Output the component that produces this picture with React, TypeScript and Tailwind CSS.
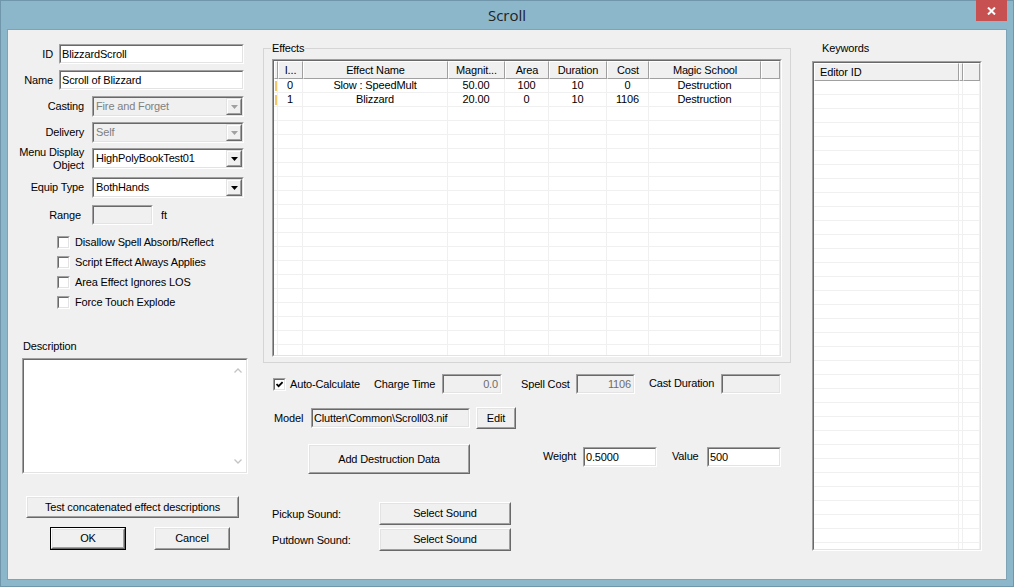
import React from "react";

type Cell = React.ReactNode;

function Sunken({ className = "", inner = "", children }: { className?: string; inner?: string; children?: React.ReactNode }) {
  return (
    <div className={`border border-t-[#a0a0a0] border-l-[#a0a0a0] border-r-white border-b-white ${className}`}>
      <div className={`h-full w-full border border-t-[#696969] border-l-[#696969] border-r-[#e3e3e3] border-b-[#e3e3e3] ${inner}`}>
        {children}
      </div>
    </div>
  );
}

function Button({ className = "", children, isDefault = false }: { className?: string; children?: React.ReactNode; isDefault?: boolean }) {
  const face = (
    <div className={`border border-t-white border-l-white border-r-[#696969] border-b-[#696969] ${isDefault ? "h-full w-full" : "h-full w-full"}`}>
      <div className="flex h-full w-full items-center justify-center whitespace-nowrap border border-t-[#e3e3e3] border-l-[#e3e3e3] border-r-[#a0a0a0] border-b-[#a0a0a0] bg-[#f0f0f0]">
        {children}
      </div>
    </div>
  );
  return (
    <button type="button" className={`shrink-0 ${isDefault ? "border border-black" : ""} ${className}`}>
      {face}
    </button>
  );
}

function Edit({ className = "", value = "", tone = "white", right = false }: { className?: string; value?: string; tone?: "white" | "gray" | "ro"; right?: boolean }) {
  const bg = tone === "white" ? "bg-white text-black" : tone === "gray" ? "bg-[#f0f0f0] text-[#6d6d6d]" : "bg-[#f0f0f0] text-black";
  return (
    <Sunken
      className={`h-[20px] shrink-0 ${className}`}
      inner={`flex items-center overflow-hidden whitespace-nowrap ${bg} ${right ? "justify-end pl-[1px] pr-[2px]" : "pl-[1px] pr-[1px]"}`}
    >
      {value}
    </Sunken>
  );
}

function Arrow({ color }: { color: string }) {
  return (
    <svg width="7" height="4" viewBox="0 0 7 4">
      <polygon points="0,0 7,0 3.5,4" fill={color} />
    </svg>
  );
}

function Combo({ value, disabled = false }: { value: string; disabled?: boolean }) {
  return (
    <Sunken className="h-[21px] w-[152px] shrink-0" inner={`flex ${disabled ? "bg-[#f0f0f0] text-[#808080]" : "bg-white text-black"}`}>
      <div className="flex flex-1 items-center overflow-hidden whitespace-nowrap pl-[2px]">{value}</div>
      <div className="h-full w-[16px] border border-t-[#e3e3e3] border-l-[#e3e3e3] border-r-[#696969] border-b-[#696969]">
        <div className="flex h-full w-full items-center justify-center border border-t-white border-l-white border-r-[#a0a0a0] border-b-[#a0a0a0] bg-[#f0f0f0] pt-px">
          <Arrow color={disabled ? "#a0a0a0" : "#000"} />
        </div>
      </div>
    </Sunken>
  );
}

function Check({ checked = false, className = "" }: { checked?: boolean; className?: string }) {
  return (
    <Sunken className={`h-[13px] w-[13px] shrink-0 ${className}`} inner="flex items-center justify-center bg-white">
      {checked && (
        <svg width="7" height="7" viewBox="0 0 7 7">
          <polyline points="0.5,3 2.6,5.2 6.6,1" fill="none" stroke="#000" strokeWidth="1.8" />
        </svg>
      )}
    </Sunken>
  );
}

function ListView({
  className,
  tpl,
  headers,
  headerAlign,
  rows,
  count,
}: {
  className: string;
  tpl: string;
  headers: string[];
  headerAlign: string[];
  rows: Cell[][];
  count: number;
}) {
  return (
    <Sunken className={className} inner="flex flex-col overflow-hidden bg-white">
      <div className={`grid h-[18px] shrink-0 ${tpl}`}>
        {headers.map((h, i) => (
          <div
            key={i}
            className={`flex items-center overflow-hidden whitespace-nowrap border border-t-white border-l-white border-r-[#a0a0a0] border-b-[#a0a0a0] bg-[#f0f0f0] ${headerAlign[i]}`}
          >
            {h}
          </div>
        ))}
      </div>
      {Array.from({ length: count }).map((_, r) => (
        <div key={r} className={`grid h-[14px] shrink-0 ${tpl}`}>
          {headers.map((_, c) => (
            <div key={c} className="flex items-center justify-center overflow-hidden whitespace-nowrap border-r border-b border-[#f0f0f0]">
              {rows[r]?.[c]}
            </div>
          ))}
        </div>
      ))}
    </Sunken>
  );
}

const mark = <div className="mr-auto ml-px h-[10px] w-[2px] bg-[#f3c667]" />;

const effectRows: Cell[][] = [
  [mark, "0", "Slow : SpeedMult", "50.00", "100", "10", "0", "Destruction", ""],
  [mark, "1", "Blizzard", "20.00", "0", "10", "1106", "Destruction", ""],
];

function ComboRow({ mt, label, value, disabled }: { mt: string; label: React.ReactNode; value: string; disabled?: boolean }) {
  return (
    <div className={`flex h-[21px] items-center ${mt}`}>
      <div className="w-[84px] shrink-0 pr-[8px] text-right">{label}</div>
      <Combo value={value} disabled={disabled} />
    </div>
  );
}

export default function App() {
  return (
    <div className="font-['Liberation_Sans',Arial,sans-serif] text-[11px] leading-[13px] tracking-[-0.15px] text-black">
      <div className="flex h-[587px] w-[1014px] flex-col border border-[#6f96ab] bg-[#8cb6c9]">
        {/* title bar */}
        <div className="grid h-[29px] shrink-0 grid-cols-[1fr_auto_1fr] items-center">
          <div />
          <div className="font-['Open_Sans',sans-serif] text-[15px] tracking-normal text-[#222]">Scroll</div>
          <div className="flex justify-end self-start pr-[6px]">
            <div className="-mt-px flex h-[21px] w-[31px] items-center justify-center bg-[#c75050]">
              <svg width="9" height="8" viewBox="0 0 9 8">
                <path d="M1 0.5 L8 7.5 M8 0.5 L1 7.5" stroke="#fff" strokeWidth="2" />
              </svg>
            </div>
          </div>
        </div>

        {/* client area */}
        <div className="ml-[7px] flex h-[549px] w-[998px] bg-[#f0f0f0] ring-1 ring-[#7ea3b6]">
          {/* left column */}
          <div className="flex w-[255px] shrink-0 flex-col">
            <div className="mt-[14px] flex h-[20px] items-center">
              <div className="w-[51px] shrink-0 pr-[6px] text-right">ID</div>
              <Edit className="w-[185px]" value="BlizzardScroll" />
            </div>
            <div className="mt-[6px] flex h-[20px] items-center">
              <div className="w-[51px] shrink-0 pr-[6px] text-right">Name</div>
              <Edit className="w-[185px]" value="Scroll of Blizzard" />
            </div>
            <ComboRow mt="mt-[6px]" label="Casting" value="Fire and Forget" disabled />
            <ComboRow mt="mt-[5px]" label="Delivery" value="Self" disabled />
            <ComboRow
              mt="mt-[5px]"
              label={
                <>
                  Menu Display
                  <br />
                  Object
                </>
              }
              value="HighPolyBookTest01"
            />
            <ComboRow mt="mt-[8px]" label="Equip Type" value="BothHands" />
            <div className="mt-[7px] flex h-[20px] items-center">
              <div className="w-[84px] shrink-0 pr-[11px] text-right">Range</div>
              <Edit className="w-[61px]" tone="gray" />
              <span className="ml-[8px]">ft</span>
            </div>
            <div className="mt-[7px] flex flex-col">
              {["Disallow Spell Absorb/Reflect", "Script Effect Always Applies", "Area Effect Ignores LOS", "Force Touch Explode"].map((t) => (
                <div key={t} className="flex h-[20px] items-center gap-[5px] pl-[49px]">
                  <Check />
                  <span>{t}</span>
                </div>
              ))}
            </div>
            <div className="mt-[28px] pl-[15px]">Description</div>
            <Sunken className="mt-[5px] ml-[14px] h-[116px] w-[226px]" inner="flex justify-end bg-white">
              <div className="flex w-[17px] flex-col items-center justify-between py-[8px]">
                <svg width="8" height="5" viewBox="0 0 8 5">
                  <polyline points="0.5,4.5 4,1 7.5,4.5" fill="none" stroke="#c4c4c4" strokeWidth="1.3" />
                </svg>
                <svg width="8" height="5" viewBox="0 0 8 5">
                  <polyline points="0.5,0.5 4,4 7.5,0.5" fill="none" stroke="#c4c4c4" strokeWidth="1.3" />
                </svg>
              </div>
            </Sunken>
            <Button className="mt-[22px] ml-[18px] h-[22px] w-[213px]">Test concatenated effect descriptions</Button>
            <div className="mt-[9px] flex">
              <Button isDefault className="ml-[42px] h-[23px] w-[76px]">OK</Button>
              <Button className="ml-[28px] h-[23px] w-[76px]">Cancel</Button>
            </div>
          </div>

          {/* middle column */}
          <div className="flex w-[528px] shrink-0 flex-col">
            <fieldset className="mt-[12px] w-[528px] border border-[#d5d5d5] px-[8px] pt-[4px] pb-[5px]">
              <legend className="-ml-px px-px leading-[13px]">Effects</legend>
              <ListView
                className="h-[298px] w-full"
                tpl="grid-cols-[4px_25px_145px_57px_44px_58px_42px_112px_1fr]"
                headers={["", "I...", "Effect Name", "Magnit...", "Area", "Duration", "Cost", "Magic School", ""]}
                headerAlign={Array(9).fill("justify-center")}
                rows={effectRows}
                count={20}
              />
            </fieldset>

            <div className="mt-[11px] flex h-[20px] items-center">
              <Check checked className="ml-[10px]" />
              <span className="ml-[4px] w-[84px] shrink-0">Auto-Calculate</span>
              <span className="w-[68px] shrink-0">Charge Time</span>
              <Edit className="w-[60px]" value="0.0" tone="gray" right />
              <span className="ml-[19px] w-[55px] shrink-0">Spell Cost</span>
              <Edit className="w-[59px]" value="1106" tone="gray" right />
              <span className="-mt-[2px] ml-[14px] w-[72px] shrink-0">Cast Duration</span>
              <Edit className="w-[60px]" tone="gray" />
            </div>

            <div className="mt-[13px] flex h-[22px] items-center">
              <span className="ml-[11px] w-[37px] shrink-0">Model</span>
              <Edit className="w-[159px]" value={"Clutter\\Common\\Scroll03.nif"} tone="ro" />
              <Button className="ml-[6px] h-[22px] w-[40px]">Edit</Button>
            </div>

            <div className="mt-[15px] flex h-[30px] items-start">
              <Button className="ml-[45px] h-[30px] w-[162px]">Add Destruction Data</Button>
              <span className="mt-[6px] ml-[73px] w-[40px] shrink-0">Weight</span>
              <Edit className="mt-[3px] w-[74px]" value="0.5000" />
              <span className="mt-[6px] ml-[15px] w-[35px] shrink-0">Value</span>
              <Edit className="mt-[3px] w-[74px]" value="500" />
            </div>

            <div className="mt-[28px] flex h-[23px] items-center">
              <span className="ml-[9px] w-[107px] shrink-0 pt-[2px]">Pickup Sound:</span>
              <Button className="h-[23px] w-[132px]">Select Sound</Button>
            </div>
            <div className="mt-[3px] flex h-[23px] items-center">
              <span className="ml-[9px] w-[107px] shrink-0 pt-[2px]">Putdown Sound:</span>
              <Button className="h-[23px] w-[132px]">Select Sound</Button>
            </div>
          </div>

          {/* right column */}
          <div className="ml-[21px] flex w-[170px] shrink-0 flex-col">
            <div className="mt-[12px] pl-[10px]">Keywords</div>
            <ListView
              className="mt-[6px] h-[490px] w-full"
              tpl="grid-cols-[145px_4px_1fr]"
              headers={["Editor ID", "", ""]}
              headerAlign={["justify-start pl-[5px]", "justify-center", "justify-center"]}
              rows={[]}
              count={34}
            />
          </div>
        </div>
      </div>
    </div>
  );
}
